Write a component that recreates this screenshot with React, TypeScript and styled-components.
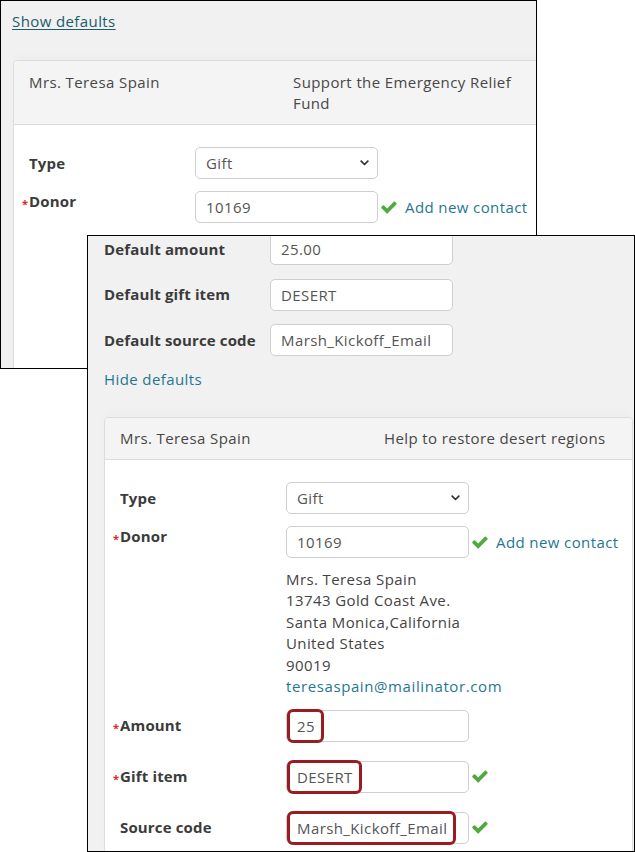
import React from 'react';
import styled, { createGlobalStyle } from 'styled-components';

const GlobalStyle = createGlobalStyle`
  html, body {
    margin: 0;
    padding: 0;
    background: #fff;
  }
  body {
    font-family: "Open Sans", "Liberation Sans", sans-serif;
    font-size: 15px;
    letter-spacing: 0.4px;
    color: #4a4a4a;
  }
`;

const Desk = styled.div`
  position: relative;
  width: 635px;
  height: 852px;
  overflow: hidden;
  background: #fff;
`;

// two captured browser windows lying on top of each other
const Window = styled.div<{ $left: number; $top: number; $width: number; $height: number }>`
  position: absolute;
  left: ${(p) => p.$left}px;
  top: ${(p) => p.$top}px;
  width: ${(p) => p.$width}px;
  height: ${(p) => p.$height}px;
  box-sizing: border-box;
  border: 1px solid #000;
  background: #f1f1f1;
  overflow: hidden;
  display: flex;
  flex-direction: column;
  align-items: flex-start;
`;

const WindowBody = styled.div<{ $padTop: number; $padLeft: number }>`
  padding: ${(p) => p.$padTop}px 0 0 ${(p) => p.$padLeft}px;
  display: flex;
  flex-direction: column;
  align-items: flex-start;
`;

const TextLink = styled.a<{ $underline?: boolean; $dark?: boolean }>`
  display: block;
  line-height: 21px;
  color: ${(p) => (p.$dark ? '#1d5b6b' : '#1f7792')};
  text-decoration: ${(p) => (p.$underline ? 'underline' : 'none')};
  text-underline-offset: 2px;
  cursor: pointer;
  white-space: nowrap;
`;

const Card = styled.div<{ $top: number; $minHeight?: number }>`
  margin-top: ${(p) => p.$top}px;
  min-height: ${(p) => p.$minHeight ?? 0}px;
  width: 529px;
  flex-shrink: 0;
  box-sizing: border-box;
  border: 1px solid #dcdcdc;
  border-radius: 4px;
  background: #fff;
  box-shadow: 0 -6px 10px rgba(0, 0, 0, 0.015);
`;

const CardHeader = styled.div<{ $padTop: number }>`
  display: grid;
  grid-template-columns: 264px 240px;
  padding: ${(p) => p.$padTop}px 15px 10px 15px;
  background: #f4f4f4;
  border-bottom: 1px solid #dcdcdc;
  border-radius: 4px 4px 0 0;
  color: #474747;
  line-height: 21px;
`;

const CardBody = styled.div`
  padding: 22px 15px 0 15px;
`;

const FormRow = styled.div<{ $top?: boolean; $gap: number }>`
  display: grid;
  grid-template-columns: 166px auto;
  align-items: ${(p) => (p.$top ? 'start' : 'center')};
  margin-bottom: ${(p) => p.$gap}px;
`;

const Label = styled.div<{ $required?: boolean }>`
  position: relative;
  font-weight: 700;
  letter-spacing: 0.15px;
  color: #3b3b3b;
  line-height: 21px;
  white-space: nowrap;

  &::before {
    content: ${(p) => (p.$required ? '"*"' : 'none')};
    position: absolute;
    left: -7px;
    top: 2px;
    font-size: 11px;
    color: #e0262b;
  }
`;

const Control = styled.div<{ $start?: boolean }>`
  width: 183px;
  height: 32px;
  flex-shrink: 0;
  box-sizing: border-box;
  border: 1px solid #cfcfcf;
  border-radius: 5px;
  background: #fff;
  padding: 0 8px 0 10px;
  display: flex;
  align-items: center;
  justify-content: ${(p) => (p.$start ? 'flex-start' : 'space-between')};
  color: #555;
  white-space: nowrap;
`;

const Highlight = styled.span`
  display: inline-flex;
  align-items: center;
  height: 34px;
  box-sizing: border-box;
  margin-left: -10px;
  padding: 0 6px 0 7px;
  border: 3px solid #9b1b22;
  border-radius: 6px;
`;

const FieldLine = styled.div`
  display: flex;
  align-items: center;
  gap: 3px;
`;

const ContactLink = styled(TextLink)`
  margin-left: 5px;
`;

const Address = styled.div`
  padding: 11px 0 0 0;
  line-height: 21.4px;
  color: #444;
`;

const Mail = styled.a`
  color: #1f7792;
  text-decoration: none;
  letter-spacing: 0.6px;
`;

const DefaultsRow = styled.div`
  display: grid;
  grid-template-columns: 166px 183px;
  align-items: center;
  margin-bottom: 13.5px;

  &:first-child {
    margin-top: -3px;
  }
`;

const CheckMark = () => (
  <svg width="16" height="13" viewBox="100 380 1600 1100" aria-hidden="true">
    <path
      fill="#53a93f"
      d="M1671 566q0 40-28 68l-724 724-136 136q-28 28-68 28t-68-28l-136-136-362-362q-28-28-28-68t28-68l136-136q28-28 68-28t68 28l294 295 656-657q28-28 68-28t68 28l136 136q28 28 28 68z"
    />
  </svg>
);

const Chevron = () => (
  <svg width="9" height="6" viewBox="0 0 9 6" aria-hidden="true">
    <path d="M1.2 1.2 4.5 4.5 7.8 1.2" fill="none" stroke="#333" strokeWidth="1.7" strokeLinecap="round" strokeLinejoin="round" />
  </svg>
);

const SelectBox = ({ value }: { value: string }) => (
  <Control>
    <span>{value}</span>
    <Chevron />
  </Control>
);

const App = () => {
  return (
    <>
      <GlobalStyle />
      <Desk>
        <Window $left={0} $top={0} $width={537} $height={369}>
          <WindowBody $padTop={10} $padLeft={11}>
            <TextLink $underline $dark>Show defaults</TextLink>
            <Card $top={28} $minHeight={320} style={{ marginLeft: 1 }}>
              <CardHeader $padTop={11}>
                <div>Mrs. Teresa Spain</div>
                <div>Support the Emergency Relief Fund</div>
              </CardHeader>
              <CardBody>
                <FormRow $gap={12}>
                  <Label>Type</Label>
                  <SelectBox value="Gift" />
                </FormRow>
                <FormRow $top $gap={12}>
                  <Label $required>Donor</Label>
                  <FieldLine>
                    <Control>10169</Control>
                    <CheckMark />
                    <ContactLink>Add new contact</ContactLink>
                  </FieldLine>
                </FormRow>
              </CardBody>
            </Card>
          </WindowBody>
        </Window>

        <Window $left={87} $top={235} $width={548} $height={617}>
          <WindowBody $padTop={0} $padLeft={16}>
            <DefaultsRow>
              <Label>Default amount</Label>
              <Control>25.00</Control>
            </DefaultsRow>
            <DefaultsRow>
              <Label>Default gift item</Label>
              <Control>DESERT</Control>
            </DefaultsRow>
            <DefaultsRow>
              <Label>Default source code</Label>
              <Control>Marsh_Kickoff_Email</Control>
            </DefaultsRow>
            <TextLink style={{ marginTop: -1 }}>Hide defaults</TextLink>
            <Card $top={27.5}>
              <CardHeader $padTop={10}>
                <div>Mrs. Teresa Spain</div>
                <div>Help to restore desert regions</div>
              </CardHeader>
              <CardBody>
                <FormRow $gap={12}>
                  <Label>Type</Label>
                  <SelectBox value="Gift" />
                </FormRow>
                <FormRow $top $gap={12.5}>
                  <Label $required>Donor</Label>
                  <div>
                    <FieldLine>
                      <Control>10169</Control>
                      <CheckMark />
                      <ContactLink>Add new contact</ContactLink>
                    </FieldLine>
                    <Address>
                      Mrs. Teresa Spain
                      <br />
                      13743 Gold Coast Ave.
                      <br />
                      Santa Monica,California
                      <br />
                      United States
                      <br />
                      90019
                      <br />
                      <Mail>teresaspain@mailinator.com</Mail>
                    </Address>
                  </div>
                </FormRow>
                <FormRow $gap={19}>
                  <Label $required>Amount</Label>
                  <FieldLine>
                    <Control $start>
                      <Highlight>25</Highlight>
                    </Control>
                  </FieldLine>
                </FormRow>
                <FormRow $gap={19}>
                  <Label $required>Gift item</Label>
                  <FieldLine>
                    <Control $start>
                      <Highlight>DESERT</Highlight>
                    </Control>
                    <CheckMark />
                  </FieldLine>
                </FormRow>
                <FormRow $gap={19}>
                  <Label>Source code</Label>
                  <FieldLine>
                    <Control $start>
                      <Highlight>Marsh_Kickoff_Email</Highlight>
                    </Control>
                    <CheckMark />
                  </FieldLine>
                </FormRow>
              </CardBody>
            </Card>
          </WindowBody>
        </Window>
      </Desk>
    </>
  );
};

export default App;
